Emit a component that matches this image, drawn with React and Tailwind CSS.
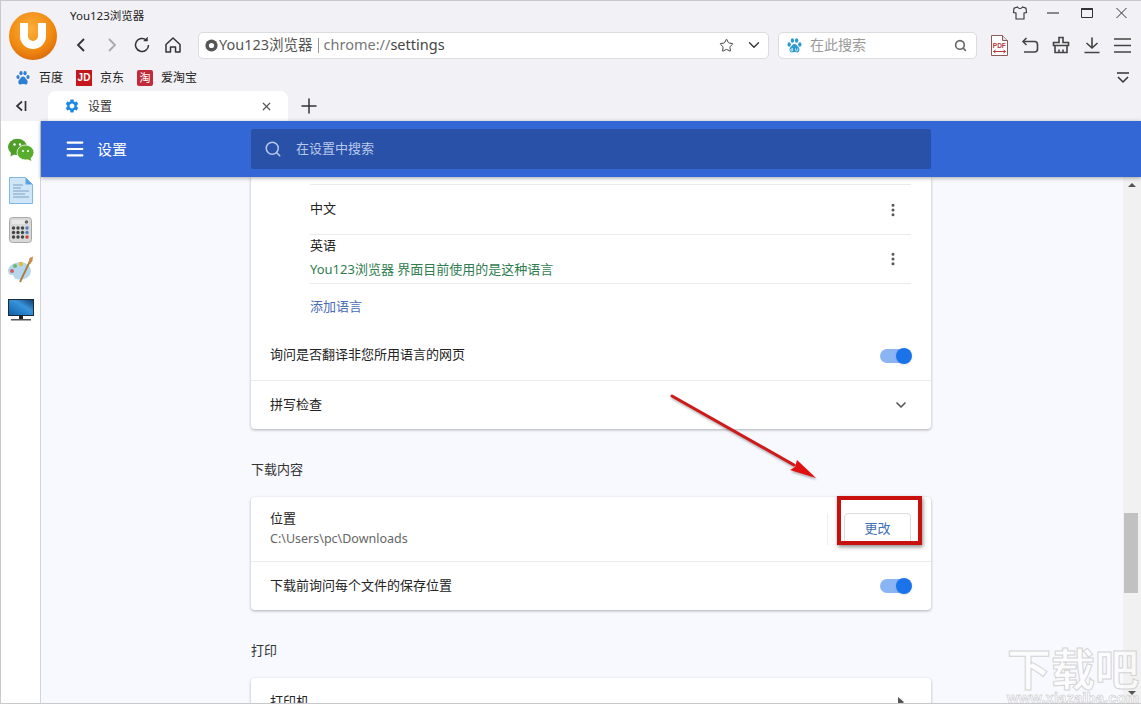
import React from 'react';
import { MoreVertical, ChevronDown, Search, Menu, X, Plus, Star } from 'lucide-react';
import { MdSettings } from 'react-icons/md';

const cjk = 'font-["Noto_Sans","Noto_Sans_CJK_SC",sans-serif]';

const Logo = () => (
  <svg width="48" height="48" viewBox="0 0 48 48">
    <defs>
      <radialGradient id="lg" cx="0.45" cy="0.35" r="0.75">
        <stop offset="0" stopColor="#fbb03b" />
        <stop offset="0.6" stopColor="#f08a12" />
        <stop offset="1" stopColor="#d4600a" />
      </radialGradient>
    </defs>
    <circle cx="24" cy="24" r="24" fill="url(#lg)" />
    <path d="M15 11v13a9 9 0 0 0 18 0V11" fill="none" stroke="#fff" strokeWidth="8" />
  </svg>
);

const Paw = ({ size = 16, color = '#2f7fd0', du = false }) => (
  <svg width={size} height={size} viewBox="0 0 16 16">
    <ellipse cx="3" cy="7" rx="1.6" ry="2.1" fill={color} />
    <ellipse cx="6" cy="3.2" rx="1.6" ry="2.1" fill={color} />
    <ellipse cx="10" cy="3.2" rx="1.6" ry="2.1" fill={color} />
    <ellipse cx="13" cy="7" rx="1.6" ry="2.1" fill={color} />
    <path d="M8 6.500c-2 0-2.400 2-3.800 3.200C3 10.800 2.800 14.500 5.500 14.500c1.200 0 1.600-.4 2.500-.4s1.300.4 2.500.4c2.700 0 2.500-3.700 1.300-4.800C10.400 8.500 10 6.500 8 6.500z" fill={color} />
    {du && <path d="M6 10.500v2.500M6 11.500a1 1 0 1 0 0 1.500M9 10.800v1.300a1 1 0 0 0 2 0v-1.300" stroke="#fff" strokeWidth="0.7" fill="none" />}
  </svg>
);

const Toggle = ({ className = '' }) => (
  <div className={`relative w-[32px] h-[16px] flex items-center ${className}`}>
    <div className="w-[30px] h-[14px] rounded-full bg-[#8ab4f3]" />
    <div className="absolute right-0 top-0 w-[16px] h-[16px] rounded-full bg-[#1a73e8] shadow-sm" />
  </div>
);

const WeChat = () => (
  <svg width="28" height="24" viewBox="0 0 28 24">
    <ellipse cx="10.500" cy="9" rx="9.500" ry="8.200" fill="#4f9e28" />
    <path d="M4 14l-.5 4.500 4.500-2.500z" fill="#4f9e28" />
    <ellipse cx="18.500" cy="14.500" rx="8.500" ry="7.500" fill="#58ad2e" stroke="#fff" strokeWidth="0.8" />
    <path d="M23 19l1.500 4-4.500-2z" fill="#58ad2e" />
    <circle cx="7.500" cy="6.500" r="1.200" fill="#fff" />
    <circle cx="13" cy="6.500" r="1.200" fill="#fff" />
    <circle cx="16" cy="13" r="1" fill="#fff" />
    <circle cx="21" cy="13" r="1" fill="#fff" />
  </svg>
);

const DocIcon = () => (
  <svg width="24" height="27" viewBox="0 0 24 27">
    <path d="M.5.500h16l7 7v19H.5z" fill="#cfe6f9" stroke="#7fb8e6" />
    <path d="M16.500.500v7h7z" fill="#5aa5e0" />
    <path d="M4 8h10M4 11h8M4 14h16M4 17h12M4 20h16" stroke="#7f9fc0" strokeWidth="1" />
  </svg>
);

const CalcIcon = () => {
  const rows = [11, 15.500, 20];
  const cols = [4.500, 9, 13.500, 18];
  return (
    <svg width="23" height="26" viewBox="0 0 23 26">
      <rect x="0.500" y="0.500" width="22" height="25" rx="3" fill="#d8d8d8" stroke="#a8a8a8" />
      <rect x="3" y="3" width="17" height="4" fill="#e8e8e8" />
      <circle cx="17.500" cy="5" r="1.800" fill="#666" />
      {rows.map((y, i) =>
        cols.map((x, j) => (
          <circle key={`${i}-${j}`} cx={x} cy={y} r="1.700" fill={j === 3 ? (i === 2 ? '#c8403f' : '#4f7fc0') : '#444'} />
        ))
      )}
    </svg>
  );
};

const PaletteIcon = () => (
  <svg width="27" height="27" viewBox="0 0 27 27">
    <path d="M1 14c2-7 12-10 19-6 5 3 5 10 1 13-4 3-8 3-12 2-3-1-1-4-4-4-3 0-4-2-4-5z" fill="#b6d6ee" />
    <circle cx="5" cy="15" r="2" fill="#d06060" />
    <circle cx="8" cy="10" r="2" fill="#6fb86a" />
    <circle cx="14" cy="8" r="2.200" fill="#e3b93f" />
    <path d="M13 26L23 5" stroke="#a97c3c" strokeWidth="1.800" />
    <path d="M21.500 7l1-5 3.500-1.500-.500 4-2 3.500z" fill="#c98c4a" />
  </svg>
);

const MonitorIcon = () => (
  <svg width="26" height="22" viewBox="0 0 26 22">
    <defs>
      <linearGradient id="mon" x1="0" y1="1" x2="1" y2="0">
        <stop offset="0" stopColor="#0c5fa8" />
        <stop offset="0.6" stopColor="#3a95dc" />
        <stop offset="1" stopColor="#0f3f70" />
      </linearGradient>
    </defs>
    <rect x="0" y="0" width="26" height="17" fill="#1d2a35" />
    <rect x="1" y="1" width="24" height="15" fill="url(#mon)" />
    <rect x="11" y="17" width="4" height="3" fill="#222" />
    <rect x="3" y="20" width="20" height="1.500" fill="#555" />
  </svg>
);

const PdfIcon = () => (
  <svg width="17" height="21" viewBox="0 0 17 21">
    <path d="M.500.500h11l5 5v15H.500z" fill="#fff" stroke="#8a5a5a" />
    <path d="M11.500.500v5h5" fill="#e8dcdc" stroke="#8a5a5a" />
    <text x="1.800" y="12.500" fontSize="6.500" fontWeight="700" fill="#b23a3a" fontFamily="Liberation Sans, sans-serif">PDF</text>
    <path d="M2.500 16.500h12M2.500 16.500l2-1.500M2.500 16.500l2 1.500M14.500 16.500l-2-1.500M14.500 16.500l-2 1.500" stroke="#b23a3a" strokeWidth="1" fill="none" />
  </svg>
);

const tool = { fill: 'none', stroke: '#444', strokeWidth: 1.600 };

const Row = ({ children, className = '' }) => (
  <div className={`flex items-center justify-between ${className}`}>{children}</div>
);

export default function App() {
  return (
    <div className={`w-[1141px] h-[704px] overflow-hidden flex flex-col bg-[#f2f1f5] border-t border-l border-b border-[#c9c9cd] text-[13px] ${cjk}`}>
      {/* browser chrome */}
      <div className="h-[120px] flex flex-col shrink-0">
        <div className="flex h-[63px]">
          <div className="w-[69px] pl-[8px] pt-[11px]">
            <Logo />
          </div>
          <div className="flex-1 flex flex-col">
            <div className="h-[31px] flex items-start justify-between">
              <span className="text-[11.500px] text-[#222] mt-[6px]">You123浏览器</span>
              <div className="flex items-center mt-[5px] pr-[14px]">
                <svg width="14" height="14" viewBox="0 0 14 14" fill="none" stroke="#333" strokeWidth="1.100"><path d="M4.500 1L1 2.200.5 6.500l2.500.5v6h8V7l2.500-.5L13 2.200 9.500 1C8.500 3 5.500 3 4.500 1z" /></svg>
                <svg width="12" height="14" viewBox="0 0 12 14" stroke="#333" strokeWidth="1.100" className="ml-[20px]"><path d="M0 7h12" /></svg>
                <svg width="12" height="14" viewBox="0 0 12 14" fill="none" stroke="#333" className="ml-[22px]"><path d="M.5 2.500h11v9H.5z" /><path d="M.5 3h11" strokeWidth="2" /></svg>
                <svg width="11" height="14" viewBox="0 0 11 14" stroke="#333" strokeWidth="1" className="ml-[23px]"><path d="M.5 2l10 10M10.500 2L.5 12" /></svg>
              </div>
            </div>
            <div className="h-[26px] flex items-center">
              <div className="flex items-center w-[128px] pl-[3px] gap-[13px]">
                <svg width="17" height="18" viewBox="0 0 17 18" fill="none" stroke="#333" strokeWidth="1.800"><path d="M11 3L5 9l6 6" /></svg>
                <svg width="17" height="18" viewBox="0 0 17 18" fill="none" stroke="#aaa" strokeWidth="1.800"><path d="M6 3l6 6-6 6" /></svg>
                <svg width="18" height="18" viewBox="0 0 18 18" fill="none" stroke="#333" strokeWidth="1.500"><path d="M15.500 9a6.500 6.500 0 1 1-2.200-4.900" /><path d="M14.500 1v4h-4" fill="#333" strokeWidth="0.500" /></svg>
                <svg width="18" height="18" viewBox="0 0 18 18" fill="none" stroke="#333" strokeWidth="1.500"><path d="M2 8.500L9 2l7 6.500V16h-4.500v-5h-5v5H2z" strokeLinejoin="round" /></svg>
              </div>
              <div className="w-[571px] h-[27px] bg-white border border-[#dcdce0] rounded-[5px] flex items-center pl-[6px] pr-[5px]">
                <svg width="13" height="13" viewBox="0 0 16 16" className="shrink-0"><circle cx="8" cy="8" r="7.500" fill="#555" /><circle cx="8" cy="8" r="3.200" fill="#fff" /></svg>
                <span className="ml-[1px] text-[14.500px] text-[#555]">You123浏览器</span>
                <span className="mx-[5px] w-px h-[15px] bg-[#999]" />
                <span className="text-[14.500px] text-[#777]">chrome://<span className="text-[#444]">settings</span></span>
                <Star size={15} strokeWidth={1.600} className="ml-auto text-[#444]" />
                <ChevronDown size={18} strokeWidth={1.800} className="ml-[11px] text-[#333]" />
              </div>
              <div className="ml-[9px] w-[199px] h-[27px] bg-white border border-[#dcdce0] rounded-[5px] flex items-center pl-[7px] pr-[9px]">
                <Paw size={17} color="#2d9bd0" du />
                <span className="ml-[7px] pb-[1px] text-[14px] text-[#999]">在此搜索</span>
                <Search size={13} strokeWidth={3} className="ml-auto text-[#666]" />
              </div>
              <div className="flex items-center ml-[14px] gap-[13px]">
                <PdfIcon />
                <svg width="18" height="18" viewBox="0 0 18 18" {...tool}><path d="M5.500 2L2 5.500 5.500 9" /><path d="M2 5.500h11.500a3 3 0 0 1 3 3V13a3 3 0 0 1-3 3H3" /></svg>
                <svg width="18" height="18" viewBox="0 0 18 18" {...tool}><path d="M7 1.500h4v5h5.500v3h-15v-3H7zM3 9.500V16.500h12V9.500M7 16.500v-3M11 16.500v-3" /></svg>
                <svg width="18" height="18" viewBox="0 0 18 18" {...tool}><path d="M9 1.500V12M3.500 7L9 12l5.500-5M1.500 16.500h15" /></svg>
                <svg width="17" height="17" viewBox="0 0 17 17" {...tool}><path d="M0 2h17M0 8.500h17M0 15h17" /></svg>
              </div>
            </div>
          </div>
        </div>
        <div className="h-[27px] flex items-center pl-[14px] pr-[11px] text-[12px] text-[#222]">
          <Paw size={16} color="#2f7fd0" />
          <span className="ml-[8px]">百度</span>
          <span className="ml-[13px] w-[16px] h-[16px] bg-[#c4161c] text-white text-[10px] font-bold flex items-center justify-center font-['Liberation_Sans',sans-serif]">JD</span>
          <span className="ml-[8px]">京东</span>
          <span className="ml-[13px] w-[16px] h-[16px] rounded-[2px] bg-[#c22a3a] text-white text-[11px] leading-none flex items-center justify-center">淘</span>
          <span className="ml-[8px]">爱淘宝</span>
          <svg width="14" height="14" viewBox="0 0 14 14" fill="none" stroke="#333" strokeWidth="1.500" className="ml-auto"><path d="M1 2h12M2 6l5 5 5-5" /></svg>
        </div>
        <div className="h-[30px] flex items-end">
          <div className="w-[47px] h-[30px] flex items-center pl-[14px]">
            <svg width="12" height="12" viewBox="0 0 12 12" fill="none" stroke="#333" strokeWidth="1.700"><path d="M7 1.500L2 6l5 4.500M10.500 1v10" /></svg>
          </div>
          <div className="w-[240px] h-[30px] bg-white rounded-t-[8px] flex items-center pl-[16px] pr-[15px]">
            <MdSettings size={16} color="#1e88e5" />
            <span className="ml-[8px] pt-[1px] text-[12px] text-[#333]">设置</span>
            <X size={13} strokeWidth={2.200} className="ml-auto text-[#555]" />
          </div>
          <div className="h-[30px] flex items-center ml-[9px]">
            <Plus size={24} strokeWidth={1.500} className="text-[#333]" />
          </div>
        </div>
      </div>

      <div className="flex-1 min-h-0 flex relative">
        {/* side bar */}
        <div className="w-[40px] shrink-0 bg-white border-r border-[#d5d5d8] flex flex-col items-center pt-[17px]">
          <WeChat />
          <div className="mt-[15px]"><DocIcon /></div>
          <div className="mt-[13px]"><CalcIcon /></div>
          <div className="mt-[13px]"><PaletteIcon /></div>
          <div className="mt-[16px]"><MonitorIcon /></div>
        </div>

        {/* settings page */}
        <div className="flex-1 min-w-0 flex flex-col">
          <div className="h-[56px] shrink-0 bg-[#3367d6] flex items-center pl-[23px] shadow-[0_1px_4px_rgba(0,0,0,0.35)] relative z-10">
            <Menu size={22} strokeWidth={2.400} className="text-white" />
            <span className="ml-[11px] text-[15px] text-white w-[154px] shrink-0">设置</span>
            <div className="w-[680px] h-[40px] bg-[#2a51a8] rounded-[2px] flex items-center pl-[13px]">
              <Search size={18} strokeWidth={2} className="text-[#b8c8ea]" />
              <span className="ml-[14px] text-[13px] text-[#b8c8ea]">在设置中搜索</span>
            </div>
          </div>
          <div className="flex-1 min-h-0 flex bg-[#f8f9fe]">
            <div className="flex-1 min-w-0 pl-[210px] overflow-hidden">
              <div className="w-[680px] bg-white rounded-b-[4px] shadow-[0_1px_3px_rgba(60,64,67,0.4)]">
                <div className="pl-[59px] pr-[20px] pt-[7px]">
                  <div className="h-[51px] border-t border-b border-[#eaeaea] flex items-center justify-between text-[#222]">
                    <span className="pb-[2px]">中文</span>
                    <MoreVertical size={16} strokeWidth={2.500} className="text-[#555] mr-[10px]" />
                  </div>
                  <div className="h-[49px] border-b border-[#eaeaea] flex items-center justify-between">
                    <div className="flex flex-col gap-[4px] leading-[20px] pb-[4px]">
                      <span className="text-[#222]">英语</span>
                      <span className="text-[#2f7d4f] text-[13px]">You123浏览器 界面目前使用的是这种语言</span>
                    </div>
                    <MoreVertical size={16} strokeWidth={2.500} className="text-[#555] mr-[10px]" />
                  </div>
                  <div className="h-[46px] flex items-center text-[#4a6db5]">添加语言</div>
                </div>
                <Row className="h-[50px] pl-[19px] pr-[19px] text-[#222]">
                  <span>询问是否翻译非您所用语言的网页</span>
                  <Toggle className="mt-[2px]" />
                </Row>
                <Row className="h-[49px] pl-[19px] pr-[22px] pb-[1px] border-t border-[#eaeaea] text-[#222]">
                  <span>拼写检查</span>
                  <ChevronDown size={16} strokeWidth={2.500} className="text-[#555]" />
                </Row>
              </div>

              <h2 className="mt-[30px] h-[20px] leading-[20px] text-[13px] font-normal text-[#333]">下载内容</h2>
              <div className="mt-[18px] w-[680px] bg-white rounded-[4px] shadow-[0_1px_3px_rgba(60,64,67,0.4)]">
                <Row className="h-[64px] pl-[19px] pr-[20px]">
                  <div className="flex flex-col gap-[1px] pb-[1px] leading-[20px]">
                    <span className="text-[#222]">位置</span>
                    <span className="text-[12.500px] text-[#666]">C:\Users\pc\Downloads</span>
                  </div>
                  <div className="flex items-center">
                    <span className="w-px h-[32px] bg-[#eeeeee] mr-[16px]" />
                    <button className="w-[67px] h-[32px] bg-white border border-[#dadce0] rounded-[4px] text-[#3f6fb5] text-[13px]">更改</button>
                  </div>
                </Row>
                <Row className="h-[49px] pl-[19px] pr-[19px] border-t border-[#eaeaea] text-[#222]">
                  <span>下载前询问每个文件的保存位置</span>
                  <Toggle />
                </Row>
              </div>

              <h2 className="mt-[30px] h-[20px] leading-[20px] text-[13px] font-normal text-[#333]">打印</h2>
              <div className="mt-[18px] w-[680px] bg-white rounded-t-[4px] shadow-[0_1px_3px_rgba(60,64,67,0.4)]">
                <Row className="h-[48px] pl-[19px] pr-[26px] text-[#222]">
                  <span>打印机</span>
                  <svg width="8" height="10" viewBox="0 0 8 10" fill="#555"><path d="M1 0l6 5-6 5z" /></svg>
                </Row>
              </div>
            </div>
            {/* scrollbar */}
            <div className="w-[18px] shrink-0 bg-[#f1f1f1] flex flex-col items-center pt-[6px]">
              <span className="w-0 h-0 border-x-[4px] border-x-transparent border-b-[4px] border-b-[#555]" />
              <div className="mt-[326px] w-[14px] h-[80px] bg-[#c1c1c1] self-start ml-[1px]" />
              <span className="mt-[98px] w-0 h-0 border-x-[4px] border-x-transparent border-t-[4px] border-t-[#555]" />
            </div>
          </div>
        </div>

        {/* annotations */}
        <svg className="absolute left-[660px] top-[265px] pointer-events-none drop-shadow-[1px_2px_1px_rgba(0,0,0,0.3)]" width="170" height="100" viewBox="0 0 170 100">
          <path d="M11 10L133 79" stroke="#cf1a1a" strokeWidth="3" strokeLinecap="round" />
          <path d="M155 92L129 84l5-3 2-7z" fill="#e01010" />
        </svg>
        <div className="absolute left-[836px] top-[375px] w-[85px] h-[49px] border-[4px] border-[#c8100f] shadow-[1px_2px_4px_rgba(0,0,0,0.45)]" />
        <div className="absolute left-[1006px] top-[525px] w-[132px] flex flex-col items-end pointer-events-none">
          <span className="h-[46px] text-[44px] leading-[46px] font-bold whitespace-nowrap text-white/60 [-webkit-text-stroke:1px_#d4d4d4]">下载吧</span>
          <span className="h-[12px] text-[15px] leading-[12px] font-bold whitespace-nowrap text-white/60 [-webkit-text-stroke:0.500px_#c4c4c4] font-['Liberation_Sans',sans-serif]">www.xiazaiba.com</span>
        </div>
      </div>
    </div>
  );
}
